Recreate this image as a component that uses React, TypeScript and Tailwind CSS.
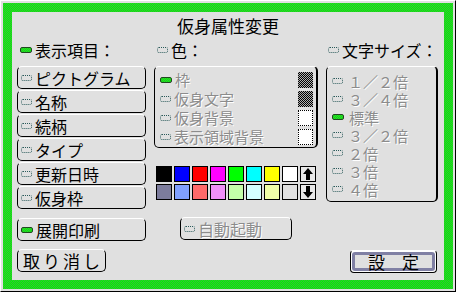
import React from "react";

const GREEN =
  "bg-[image:repeating-conic-gradient(#00ff00_0_25%,#3fb03f_0_50%)] bg-[length:2px_2px]";
const DIS = "text-[#8c8c8c] [text-shadow:1px_1px_0_#ffffff]";

function Ind({ on }: { on?: boolean }) {
  return on ? (
    <span className={"block w-[12px] h-[6px] rounded-[2px] border border-[#1f4a1f] shrink-0 " + GREEN} />
  ) : (
    <span className="block w-[11px] h-[6px] rounded-[2px] border border-dotted border-[#2a5a5a] shrink-0" />
  );
}

function Btn({ label, on, disabled }: { label: string; on?: boolean; disabled?: boolean }) {
  return (
    <div className="h-[23px] mb-[1px] rounded-[5px] border border-black border-t-white flex items-center pl-[3px] gap-[3px]">
      <Ind on={on} />
      <span className={disabled ? DIS : ""}>{label}</span>
    </div>
  );
}

const row1 = ["#000000", "#0000ff", "#ff0000", "#ff00ff", "#00ff00", "#00ffff", "#ffff00", "#ffffff"];
const row2 = ["#7c7c9c", "#80a0ff", "#ff6a6a", "#f090f8", "#c4ffa8", "#d4ffff", "#f0ffa8", "#e0e0e0"];

function Arrow({ up }: { up?: boolean }) {
  return (
    <div className="w-[16px] h-[16px] border border-black bg-[#e8e8e8] flex items-center justify-center">
      <svg width="10" height="12" viewBox="0 0 10 12" className={up ? "" : "rotate-180"}>
        <polygon points="5,0 10,6 7,6 7,12 3,12 3,6 0,6" fill="#000" />
      </svg>
    </div>
  );
}

export default function App() {
  const colorRows: { label: string; on?: boolean; sw: "dark" | "white" }[] = [
    { label: "枠", on: true, sw: "dark" },
    { label: "仮身文字", sw: "dark" },
    { label: "仮身背景", sw: "white" },
    { label: "表示領域背景", sw: "white" },
  ];
  const sizes = ["１／２倍", "３／４倍", "標準", "３／２倍", "２倍", "３倍", "４倍"];
  return (
    <div className="w-[456px] h-[292px] bg-[#e0e0e0] border border-t-white border-l-white border-r-black border-b-black p-[2px] font-['Noto_Sans_CJK_JP',sans-serif] text-[16px] leading-[20px] text-black">
      <div className={"w-full h-full p-[9px] " + GREEN}>
        <div className="w-full h-full bg-[#e0e0e0] flex flex-col">
          <div className="h-[28px] flex items-center justify-center text-[17px]">仮身属性変更</div>
          <div className="h-[20px] flex items-center pl-[5px] gap-[8px]">
            <div className="w-[129px] flex items-center pl-[3px] gap-[3px]">
              <Ind on />
              <span>表示項目：</span>
            </div>
            <div className="w-[164px] flex items-center pl-[3px] gap-[3px]">
              <Ind />
              <span>色：</span>
            </div>
            <div className="w-[112px] flex items-center pl-[2px] gap-[3px]">
              <Ind />
              <span>文字サイズ：</span>
            </div>
          </div>
          <div className="mt-[6px] flex items-start pl-[5px] gap-[8px]">
            <div className="w-[129px] flex flex-col">
              <Btn label="ピクトグラム" />
              <Btn label="名称" />
              <Btn label="続柄" />
              <Btn label="タイプ" />
              <Btn label="更新日時" />
              <Btn label="仮身枠" />
              <div className="mt-[8px]">
                <Btn label="展開印刷" on />
              </div>
              <div className="mt-[7px] w-[89px] h-[23px] rounded-[5px] border border-black border-t-white flex items-center justify-center text-[17px] tracking-[3px] pl-[3px]">
                取り消し
              </div>
            </div>
            <div className="w-[164px] flex flex-col">
              <div className="h-[82px] rounded-[5px] border border-black border-t-white border-r-2 pt-[3px] flex flex-col">
                {colorRows.map((r) => (
                  <div key={r.label} className="h-[19px] leading-[18px] text-[15px] flex items-center pl-[5px] pr-[3px] gap-[3px]">
                    <Ind on={r.on} />
                    <span className={DIS}>{r.label}</span>
                    {r.sw === "dark" ? (
                      <span className="ml-auto block w-[15px] h-[16px] bg-[image:repeating-conic-gradient(#000000_0_25%,#b0b0b0_0_50%)] bg-[length:2px_2px]" />
                    ) : (
                      <span className="ml-auto block w-[15px] h-[16px] bg-white border border-dotted border-black" />
                    )}
                  </div>
                ))}
              </div>
              <div className="mt-[18px] ml-[2px] flex flex-col gap-[2px]">
                {[row1, row2].map((row, i) => (
                  <div key={i} className="flex gap-[2px]">
                    {row.map((c, j) => (
                      <span
                        key={j}
                        className="block w-[16px] h-[16px] border border-black"
                        style={{ backgroundColor: c }}
                      />
                    ))}
                    <Arrow up={i === 0} />
                  </div>
                ))}
              </div>
              <div className="mt-[17px] ml-[26px] w-[112px]">
                <Btn label="自動起動" disabled />
              </div>
            </div>
            <div className="w-[112px] flex flex-col">
              <div className="h-[136px] rounded-[5px] border border-black border-t-white border-r-2 pt-[5px] flex flex-col">
                {sizes.map((s) => (
                  <div key={s} className="h-[18px] leading-[17px] text-[15px] flex items-center pl-[5px] gap-[5px]">
                    <Ind on={s === "標準"} />
                    <span className={DIS}>{s}</span>
                  </div>
                ))}
              </div>
              <div className="mt-[48px] ml-[24px] w-[87px] h-[23px] rounded-[4px] border border-black border-t-white bg-white p-[1px]">
                <div className="w-full h-full rounded-[3px] border-[3px] border-[#8080a4] bg-[#e0e0e0] flex items-center justify-center text-[17px] leading-[17px]">
                  設　定
                </div>
              </div>
            </div>
          </div>
        </div>
      </div>
    </div>
  );
}
